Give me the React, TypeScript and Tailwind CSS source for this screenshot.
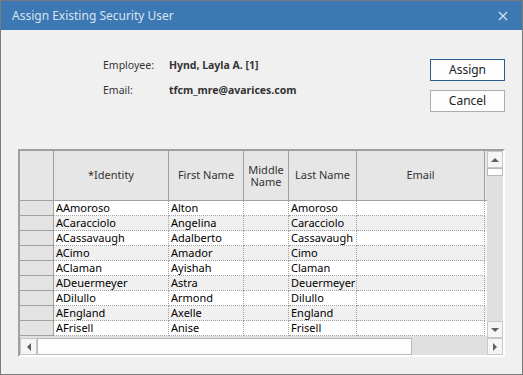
import React from "react";

const rows = [
  ["AAmoroso", "Alton", "", "Amoroso"],
  ["ACaracciolo", "Angelina", "", "Caracciolo"],
  ["ACassavaugh", "Adalberto", "", "Cassavaugh"],
  ["ACimo", "Amador", "", "Cimo"],
  ["AClaman", "Ayishah", "", "Claman"],
  ["ADeuermeyer", "Astra", "", "Deuermeyer"],
  ["ADilullo", "Armond", "", "Dilullo"],
  ["AEngland", "Axelle", "", "England"],
  ["AFrisell", "Anise", "", "Frisell"],
];

const font = { fontFamily: '"Segoe UI", "Noto Sans", "Open Sans", sans-serif' };

function Arrow({ dir }: { dir: "up" | "down" | "left" | "right" }) {
  const pts = {
    up: "1,6 5,2 9,6",
    down: "1,2 5,6 9,2",
    left: "6,1 2,5 6,9",
    right: "2,1 6,5 2,9",
  }[dir];
  const vert = dir === "up" || dir === "down";
  return (
    <svg width={vert ? 10 : 8} height={vert ? 8 : 10} viewBox={vert ? "0 0 10 8" : "0 0 8 10"}>
      <polygon points={pts} fill="#606060" />
    </svg>
  );
}

export default function App() {
  return (
    <div
      className="w-[523px] h-[375px] border border-[#7a7a7a] bg-[#f0f0f0] flex flex-col overflow-hidden"
      style={font}
    >
      {/* title bar */}
      <div className="h-[29px] bg-[#3c78b4] flex items-center pl-[11px] pr-[14px] shrink-0">
        <span className="text-[12px] text-[#d8e3ee]">Assign Existing Security User</span>
        <svg className="ml-auto" width="10" height="10" viewBox="0 0 10 10">
          <path d="M1 1 L9 9 M9 1 L1 9" stroke="#d8e3ee" strokeWidth="1.2" />
        </svg>
      </div>

      <div className="flex-1 flex flex-col px-[17px]">
        {/* top section */}
        <div className="h-[119px] flex shrink-0">
          <div className="pl-[85px] pt-[28px] text-[10.5px] text-[#333] flex flex-col gap-[10px]">
            <div className="flex h-[15px] items-center">
              <span className="w-[66px]">Employee:</span>
              <span className="font-bold">Hynd, Layla A. [1]</span>
            </div>
            <div className="flex h-[15px] items-center">
              <span className="w-[66px]">Email:</span>
              <span className="font-bold">tfcm_mre@avarices.com</span>
            </div>
          </div>
          <div className="ml-auto pt-[29px] flex flex-col gap-[9px]">
            <button className="w-[75px] h-[22px] border border-[#2c5d8f] bg-[#fdfdfd] text-[12px] text-[#222]">
              Assign
            </button>
            <button className="w-[75px] h-[22px] border border-[#adadad] bg-[#fdfdfd] text-[12px] text-[#222]">
              Cancel
            </button>
          </div>
        </div>

        {/* grid */}
        <div className="w-[487px] h-[208px] border-t-2 border-l-2 border-[#a0a0a0] border-r-2 border-b-2 border-r-white border-b-white flex bg-[#e0e0e0]">
          <div className="w-[467px] flex flex-col">
            {/* header */}
            <div className="flex h-[50px] text-[11px] text-[#333] bg-[#e6e6e6] border-b border-[#a0a0a0]">
              <div className="w-[34px] border-r border-[#a0a0a0]" />
              <div className="w-[115px] border-r border-[#a0a0a0] flex items-center justify-center">*Identity</div>
              <div className="w-[75px] border-r border-[#a0a0a0] flex items-center justify-center">First Name</div>
              <div className="w-[45px] border-r border-[#a0a0a0] flex flex-col items-center justify-center text-center">
                <span className="leading-[12px]">Middle</span>
                <span className="leading-[12px]">Name</span>
              </div>
              <div className="w-[68px] border-r border-[#a0a0a0] flex items-center justify-center">Last Name</div>
              <div className="w-[128px] border-r border-[#a0a0a0] flex items-center justify-center">Email</div>
            </div>
            {/* rows */}
            {rows.map((r, i) => (
              <div
                key={r[0]}
                className={`flex h-[15px] text-[11px] leading-[14px] text-black ${i % 2 === 0 ? "bg-white" : "bg-[#f0f0f0]"}`}
              >
                <div className="w-[34px] bg-[#e3e3e3] border-r border-b border-[#a0a0a0]" />
                <div className="w-[115px] pl-[2px] border-r border-b border-dotted border-[#a0a0a0] overflow-hidden whitespace-nowrap">{r[0]}</div>
                <div className="w-[75px] pl-[2px] border-r border-b border-dotted border-[#a0a0a0] overflow-hidden whitespace-nowrap">{r[1]}</div>
                <div className="w-[45px] pl-[2px] border-r border-b border-dotted border-[#a0a0a0] overflow-hidden whitespace-nowrap">{r[2]}</div>
                <div className="w-[68px] pl-[2px] border-r border-b border-dotted border-[#a0a0a0] overflow-hidden whitespace-nowrap">{r[3]}</div>
                <div className="w-[128px] border-r border-b border-dotted border-[#a0a0a0]" />
              </div>
            ))}
            {/* horizontal scrollbar */}
            <div className="mt-auto h-[17px] flex bg-[#e0e0e0]">
              <div className="w-[17px] h-[17px] bg-[#f5f5f5] border border-[#c8c8c8] flex items-center justify-center">
                <Arrow dir="left" />
              </div>
              <div className="w-[375px] h-[17px] bg-[#fdfdfd] border border-[#b8b8b8]" />
            </div>
          </div>
          {/* vertical scrollbar */}
          <div className="w-[16px] flex flex-col bg-[#e0e0e0]">
            <div className="h-[17px] bg-[#f5f5f5] border border-[#c8c8c8] flex items-center justify-center">
              <Arrow dir="up" />
            </div>
            <div className="h-[8px] bg-[#fdfdfd] border border-[#b8b8b8]" />
            <div className="mt-auto h-[17px] bg-[#f5f5f5] border border-[#c8c8c8] flex items-center justify-center">
              <Arrow dir="down" />
            </div>
            <div className="h-[17px] bg-[#f5f5f5] border border-[#c8c8c8] flex items-center justify-center">
              <Arrow dir="right" />
            </div>
          </div>
        </div>
      </div>
    </div>
  );
}
